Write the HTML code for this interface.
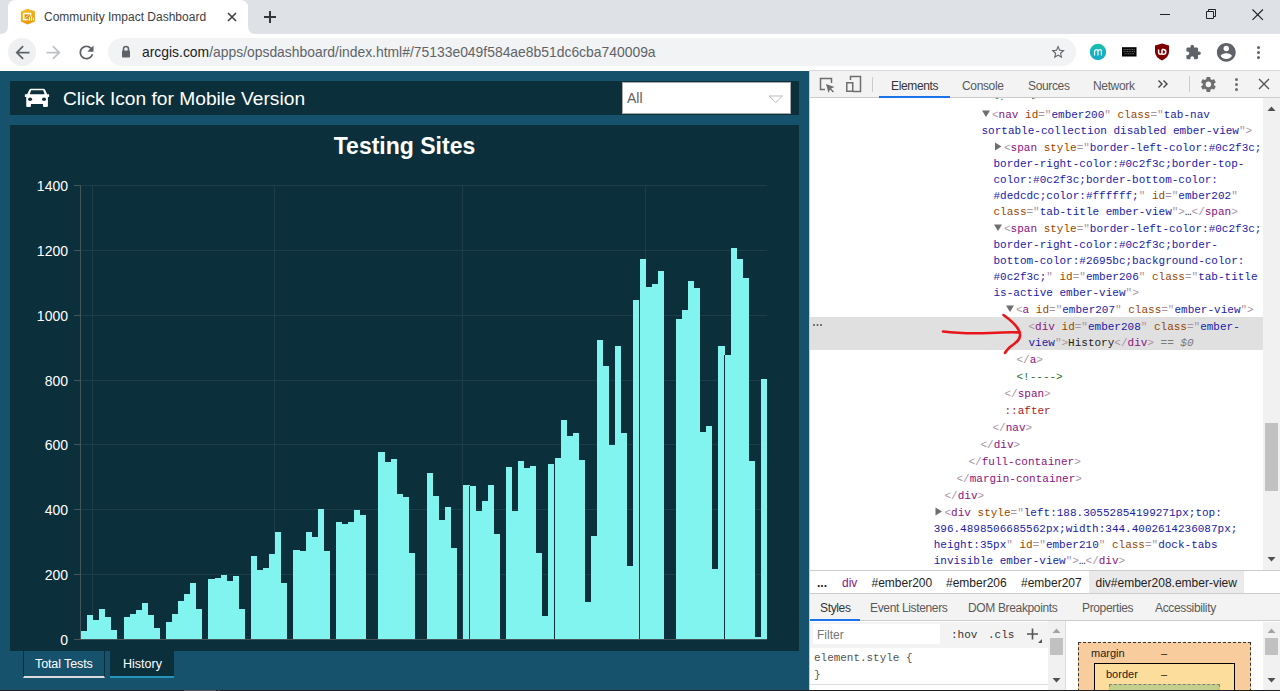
<!DOCTYPE html>
<html><head><meta charset="utf-8">
<style>
*{margin:0;padding:0;box-sizing:border-box}
html,body{width:1280px;height:691px;overflow:hidden;background:#fff;font-family:"Liberation Sans",sans-serif;position:relative}
.a{position:absolute}
.t{position:absolute;white-space:pre;line-height:1}
.mono{font-family:"Liberation Mono",monospace}
</style></head><body>

<!-- ============ BROWSER CHROME ============ -->
<div class="a" style="left:0;top:0;width:1280px;height:34px;background:#dee1e6"></div>
<svg class="a" style="left:0;top:0" width="260" height="34"><path d="M0,34 Q8,34 8,26 V8 Q8,0 16,0 H240 Q248,0 248,8 V26 Q248,34 256,34 Z" fill="#fff"/></svg>
<!-- favicon -->
<svg class="a" style="left:16px;top:5px" width="24" height="24" viewBox="0 0 24 24">
<defs><linearGradient id="fg" x1="0" y1="0" x2="0.4" y2="1"><stop offset="0" stop-color="#f7c12a"/><stop offset="1" stop-color="#e99a0c"/></linearGradient></defs>
<path d="M4.9,6.6 L11.5,3.8 L18.9,6.3 V16.6 L11.5,19.4 L4.9,16.6 Z" fill="url(#fg)"/>
<path d="M7.6,8.6 H14.6 V10.6 M11.6,14.4 H7.6 V8.6" stroke="#fff" stroke-width="1.5" fill="none"/>
<rect x="9" y="9.8" width="4.6" height="3.6" fill="#d78a10"/>
<path d="M9.2,12.8 L12.6,10.2" stroke="#fff" stroke-width="0.8"/>
<rect x="12.8" y="11.6" width="1.2" height="4" fill="#fff"/><rect x="14.9" y="11.2" width="1.2" height="4.4" fill="#fff"/><rect x="17" y="12.9" width="1.1" height="2.7" fill="#fff"/>
</svg>
<div class="t" style="left:44px;top:11px;font-size:12px;color:#3c4043">Community Impact Dashboard</div>
<svg class="a" style="left:226px;top:11px" width="12" height="12"><path d="M2,2 L10,10 M10,2 L2,10" stroke="#3c4043" stroke-width="1.6"/></svg>
<svg class="a" style="left:263px;top:10px" width="14" height="14"><path d="M7,1 V13 M1,7 H13" stroke="#35363a" stroke-width="2"/></svg>
<!-- window controls -->
<div class="a" style="left:1160px;top:14px;width:10px;height:1px;background:#202124"></div>
<svg class="a" style="left:1204px;top:7px" width="14" height="14"><path d="M2.5,4.5 H9.5 V11.5 H2.5 Z M4.5,4.5 V2.5 H11.5 V9.5 H9.5" stroke="#202124" stroke-width="1" fill="none"/></svg>
<svg class="a" style="left:1250.5px;top:7.5px" width="14" height="14"><path d="M1.5,1.5 L11.9,11.9 M11.9,1.5 L1.5,11.9" stroke="#202124" stroke-width="1.1"/></svg>

<!-- toolbar -->
<div class="a" style="left:0;top:34px;width:1280px;height:37px;background:#fff"></div>
<div class="a" style="left:8px;top:38px;width:28px;height:28px;border-radius:14px;background:#eef0f2"></div>
<svg class="a" style="left:11.5px;top:41.5px" width="21" height="21" viewBox="0 0 24 24"><path fill="#5f6368" d="M20 11H7.83l5.59-5.59L12 4l-8 8 8 8 1.41-1.41L7.83 13H20v-2z"/></svg>
<svg class="a" style="left:43.4px;top:41.5px" width="21" height="21" viewBox="0 0 24 24"><path fill="#bdc1c6" d="M4 11h12.17l-5.59-5.59L12 4l8 8-8 8-1.41-1.41L16.17 13H4v-2z"/></svg>
<svg class="a" style="left:75.5px;top:42px" width="21" height="21" viewBox="0 0 24 24"><path fill="#5f6368" d="M17.65 6.35C16.2 4.9 14.21 4 12 4c-4.42 0-7.99 3.58-7.99 8s3.57 8 7.99 8c3.730 0 6.840-2.550 7.730-6h-2.080c-.820 2.330-3.040 4-5.650 4-3.310 0-6-2.690-6-6s2.690-6 6-6c1.660 0 3.140.690 4.220 1.780L13 11h7V4l-2.350 2.350z"/></svg>
<div class="a" style="left:108px;top:38px;width:968px;height:28px;border-radius:14px;background:#f1f3f4"></div>
<svg class="a" style="left:120px;top:44px" width="12" height="16"><path d="M3.5,7 V5 A2.5,2.5 0 0 1 8.5,5 V7" stroke="#5f6368" stroke-width="1.6" fill="none"/><rect x="2" y="6.5" width="8" height="7" rx="0.8" fill="#5f6368"/></svg>
<div class="t" style="left:142px;top:46.3px;font-size:13.9px;color:#5f6368"><span style="color:#202124">arcgis.com</span>/apps/opsdashboard/index.html#/75133e049f584ae8b51dc6cba740009a</div>
<svg class="a" style="left:1049.9px;top:44.25px" width="16.2" height="16.2" viewBox="0 0 24 24"><path fill="#5f6368" d="M22 9.24l-7.19-.62L12 2 9.19 8.63 2 9.24l5.46 4.73L5.82 21 12 17.27 18.18 21l-1.63-7.030L22 9.24zM12 15.4l-3.76 2.27 1-4.28-3.32-2.88 4.38-.38L12 6.1l1.71 4.04 4.38.38-3.32 2.88 1 4.28L12 15.4z"/></svg>
<svg class="a" style="left:1089px;top:43px" width="18" height="18"><defs><linearGradient id="mg" x1="0" y1="0" x2="0" y2="1"><stop offset="0" stop-color="#19c0a6"/><stop offset="0.5" stop-color="#16b2c2"/><stop offset="1" stop-color="#17a9c9"/></linearGradient></defs><circle cx="9" cy="9" r="8.2" fill="url(#mg)"/><path d="M5.6,12.5 V7.2 M5.6,8.2 Q6.3,6.6 7.6,6.6 Q9,6.6 9,8.2 V12.5 M9,8.2 Q9.7,6.6 11,6.6 Q12.4,6.6 12.4,8.2 V12.5" stroke="#fff" stroke-width="1.1" fill="none"/></svg>
<svg class="a" style="left:1121px;top:46px" width="17" height="12"><rect x="1" y="1.2" width="14.5" height="9.3" fill="#000"/><path d="M2.5,3.6 H14 M2.5,5.6 H14 M3.5,7.8 H13" stroke="#777" stroke-width="0.9" stroke-dasharray="1.2,0.5"/></svg>
<svg class="a" style="left:1154px;top:43px" width="16" height="18"><path d="M8,0.5 L15,2.5 V9 Q15,14 8,17.5 Q1,14 1,9 V2.5 Z" fill="#800000"/><path d="M4.6,6.6 V9.6 Q4.6,11.3 6.3,11.3 Q8,11.3 8,9.6 V6.6 M8,6.6 H9.3 Q11.8,6.6 11.8,9 Q11.8,11.3 9.3,11.3 H8" stroke="#fff" stroke-width="1.5" fill="none"/></svg>
<svg class="a" style="left:1185.4px;top:44.2px" width="16.5" height="16.5" viewBox="0 0 24 24"><path fill="#5f6368" d="M20.5 11H19V7c0-1.1-.9-2-2-2h-4V3.5C13 2.12 11.88 1 10.5 1S8 2.12 8 3.5V5H4c-1.1 0-1.99.9-1.99 2v3.8H3.5c1.49 0 2.7 1.21 2.7 2.7s-1.21 2.7-2.7 2.7H2V20c0 1.1.9 2 2 2h3.8v-1.5c0-1.49 1.21-2.7 2.7-2.7 1.49 0 2.7 1.21 2.7 2.7V22H17c1.1 0 2-.9 2-2v-4h1.5c1.38 0 2.5-1.12 2.5-2.5S21.88 11 20.5 11z"/></svg>
<svg class="a" style="left:1214.7px;top:40.5px" width="22.6" height="22.6" viewBox="0 0 24 24"><path fill="#5f6368" d="M12 2C6.48 2 2 6.48 2 12s4.48 10 10 10 10-4.48 10-10S17.52 2 12 2zm0 3c1.66 0 3 1.34 3 3s-1.34 3-3 3-3-1.34-3-3 1.34-3 3-3zm0 14.2c-2.5 0-4.71-1.28-6-3.22.03-1.99 4-3.08 6-3.08 1.99 0 5.970 1.090 6 3.080-1.290 1.940-3.5 3.220-6 3.220z"/></svg>
<div class="a" style="left:1257px;top:46px;width:3px;height:3px;border-radius:2px;background:#5f6368"></div>
<div class="a" style="left:1257px;top:51px;width:3px;height:3px;border-radius:2px;background:#5f6368"></div>
<div class="a" style="left:1257px;top:56px;width:3px;height:3px;border-radius:2px;background:#5f6368"></div>

<!-- ============ DASHBOARD ============ -->
<div class="a" style="left:0;top:71px;width:809px;height:620px;background:#17526c"></div>
<div class="a" style="left:10px;top:81px;width:789px;height:34px;background:#0c2f3c"></div>
<svg class="a" style="left:20px;top:84px" width="34" height="27" viewBox="0 0 34 27">
<path d="M9.2,6 Q9.8,4.7 11,4.7 H23.4 Q24.6,4.7 25.2,6 L27.2,10.35 H29.1 V12.9 H27.9 V22 Q27.9,23 26.9,23 H24 Q23,23 23,22 V19.9 H10.9 V22 Q10.9,23 9.9,23 H7.25 Q6.25,23 6.25,22 V12.9 H4.9 V10.35 H7.2 Z" fill="#fff"/>
<path d="M11.2,6.3 H23.2 L24.6,10.35 H9.7 Z" fill="#0c2f3c"/>
<ellipse cx="10.1" cy="15.2" rx="2" ry="1.8" fill="#0c2f3c"/><ellipse cx="24" cy="15.2" rx="2" ry="1.8" fill="#0c2f3c"/>
</svg>
<div class="t" style="left:63px;top:89px;font-size:19.2px;color:#fff">Click Icon for Mobile Version</div>
<div class="a" style="left:622px;top:82px;width:169px;height:32px;background:#fff;border:1px solid #a9a9a9"></div>
<div class="t" style="left:627px;top:91px;font-size:14px;color:#606060">All</div>
<svg class="a" style="left:768px;top:95px" width="16" height="9"><path d="M1,1 H14.5 L7.75,7.5 Z" stroke="#bbb" stroke-width="1" fill="none"/></svg>

<div class="a" style="left:10px;top:125px;width:789px;height:526px;background:#0c2f3c"></div>
<div class="t" style="left:10px;top:135px;width:789px;text-align:center;font-size:23px;font-weight:bold;color:#fff">Testing Sites</div>

<svg class="a" style="left:0;top:0" width="809" height="691">
<g stroke="#1e3d4a" stroke-width="1" shape-rendering="crispEdges">
<path d="M81,185.5 H767 M81,250.5 H767 M81,315.5 H767 M81,380.5 H767 M81,444.5 H767 M81,509.5 H767 M81,574.5 H767 "/>
<path d="M92.5,185 V639 M274.5,185 V639 M462.5,185 V639 M645.5,185 V639"/>
</g>
<path d="M80.5,185 V639 M81,639.5 H767 M74,185.5 H81 M74,250.5 H81 M74,315.5 H81 M74,380.5 H81 M74,444.5 H81 M74,509.5 H81 M74,574.5 H81 M74,639.5 H81 " stroke="#44555c" stroke-width="1" shape-rendering="crispEdges"/>
<g fill="#82f4f0" shape-rendering="crispEdges">
<rect x="81.00" y="631" width="6.12" height="8"/>
<rect x="87.07" y="615" width="6.12" height="24"/>
<rect x="93.14" y="620" width="6.12" height="19"/>
<rect x="99.21" y="609" width="6.12" height="30"/>
<rect x="105.28" y="617" width="6.12" height="22"/>
<rect x="111.35" y="630" width="6.12" height="9"/>
<rect x="123.50" y="617" width="6.12" height="22"/>
<rect x="129.57" y="614" width="6.12" height="25"/>
<rect x="135.64" y="610" width="6.12" height="29"/>
<rect x="141.71" y="603" width="6.12" height="36"/>
<rect x="147.78" y="615" width="6.12" height="24"/>
<rect x="153.85" y="628" width="6.12" height="11"/>
<rect x="159.92" y="639" width="6.12" height="0"/>
<rect x="165.99" y="622" width="6.12" height="17"/>
<rect x="172.06" y="614" width="6.12" height="25"/>
<rect x="178.13" y="601" width="6.12" height="38"/>
<rect x="184.20" y="594" width="6.12" height="45"/>
<rect x="190.27" y="583" width="6.12" height="56"/>
<rect x="196.35" y="609" width="6.12" height="30"/>
<rect x="208.49" y="579" width="6.12" height="60"/>
<rect x="214.56" y="578" width="6.12" height="61"/>
<rect x="220.63" y="575" width="6.12" height="64"/>
<rect x="226.70" y="581" width="6.12" height="58"/>
<rect x="232.77" y="576" width="6.12" height="63"/>
<rect x="238.84" y="609" width="6.12" height="30"/>
<rect x="250.98" y="556" width="6.12" height="83"/>
<rect x="257.05" y="570" width="6.12" height="69"/>
<rect x="263.12" y="568" width="6.12" height="71"/>
<rect x="269.19" y="554" width="6.12" height="85"/>
<rect x="275.27" y="532" width="6.12" height="107"/>
<rect x="281.34" y="583" width="6.12" height="56"/>
<rect x="293.48" y="550" width="6.12" height="89"/>
<rect x="299.55" y="551" width="6.12" height="88"/>
<rect x="305.62" y="532" width="6.12" height="107"/>
<rect x="311.69" y="537" width="6.12" height="102"/>
<rect x="317.76" y="509" width="6.12" height="130"/>
<rect x="323.83" y="551" width="6.12" height="88"/>
<rect x="335.97" y="522" width="6.12" height="117"/>
<rect x="342.04" y="524" width="6.12" height="115"/>
<rect x="348.12" y="522" width="6.12" height="117"/>
<rect x="354.19" y="510" width="6.12" height="129"/>
<rect x="360.26" y="515" width="6.12" height="124"/>
<rect x="378.47" y="452" width="6.12" height="187"/>
<rect x="384.54" y="462" width="6.12" height="177"/>
<rect x="390.61" y="459" width="6.12" height="180"/>
<rect x="396.68" y="494" width="6.12" height="145"/>
<rect x="402.75" y="497" width="6.12" height="142"/>
<rect x="408.82" y="553" width="6.12" height="86"/>
<rect x="427.04" y="473" width="6.12" height="166"/>
<rect x="433.11" y="496" width="6.12" height="143"/>
<rect x="439.18" y="520" width="6.12" height="119"/>
<rect x="445.25" y="507" width="6.12" height="132"/>
<rect x="451.32" y="548" width="6.12" height="91"/>
<rect x="463.46" y="485" width="6.12" height="154"/>
<rect x="469.53" y="486" width="6.12" height="153"/>
<rect x="475.60" y="511" width="6.12" height="128"/>
<rect x="481.67" y="501" width="6.12" height="138"/>
<rect x="487.74" y="485" width="6.12" height="154"/>
<rect x="493.81" y="534" width="6.12" height="105"/>
<rect x="505.96" y="467" width="6.12" height="172"/>
<rect x="512.03" y="511" width="6.12" height="128"/>
<rect x="518.10" y="461" width="6.12" height="178"/>
<rect x="524.17" y="468" width="6.12" height="171"/>
<rect x="530.24" y="466" width="6.12" height="173"/>
<rect x="536.31" y="553" width="6.12" height="86"/>
<rect x="542.38" y="616" width="6.12" height="23"/>
<rect x="548.45" y="464" width="6.12" height="175"/>
<rect x="554.52" y="458" width="6.12" height="181"/>
<rect x="560.59" y="420" width="6.12" height="219"/>
<rect x="566.66" y="436" width="6.12" height="203"/>
<rect x="572.73" y="433" width="6.12" height="206"/>
<rect x="578.81" y="460" width="6.12" height="179"/>
<rect x="584.88" y="602" width="6.12" height="37"/>
<rect x="590.95" y="536" width="6.12" height="103"/>
<rect x="597.02" y="340" width="6.12" height="299"/>
<rect x="603.09" y="366" width="6.12" height="273"/>
<rect x="609.16" y="445" width="6.12" height="194"/>
<rect x="615.23" y="346" width="6.12" height="293"/>
<rect x="621.30" y="433" width="6.12" height="206"/>
<rect x="627.37" y="566" width="6.12" height="73"/>
<rect x="633.44" y="300" width="6.12" height="339"/>
<rect x="639.51" y="259" width="6.12" height="380"/>
<rect x="645.58" y="287" width="6.12" height="352"/>
<rect x="651.65" y="284" width="6.12" height="355"/>
<rect x="657.73" y="271" width="6.12" height="368"/>
<rect x="675.94" y="319" width="6.12" height="320"/>
<rect x="682.01" y="310" width="6.12" height="329"/>
<rect x="688.08" y="281" width="6.12" height="358"/>
<rect x="694.15" y="288" width="6.12" height="351"/>
<rect x="700.22" y="432" width="6.12" height="207"/>
<rect x="706.29" y="426" width="6.12" height="213"/>
<rect x="712.36" y="569" width="6.12" height="70"/>
<rect x="718.43" y="346" width="6.12" height="293"/>
<rect x="724.50" y="355" width="6.12" height="284"/>
<rect x="730.58" y="248" width="6.12" height="391"/>
<rect x="736.65" y="259" width="6.12" height="380"/>
<rect x="742.72" y="278" width="6.12" height="361"/>
<rect x="748.79" y="461" width="6.12" height="178"/>
<rect x="754.86" y="637" width="6.12" height="2"/>
<rect x="760.93" y="379" width="6.12" height="260"/>
</g>
<g shape-rendering="crispEdges"><rect x="469.0" y="486" width="1" height="153" fill="#0c2f3c"/><rect x="554.0" y="464" width="1" height="175" fill="#0c2f3c"/><rect x="639.0" y="300" width="1" height="339" fill="#0c2f3c"/><rect x="724.0" y="355" width="1" height="284" fill="#0c2f3c"/></g>
</svg>
<div class="t" style="left:20px;top:179px;width:48px;text-align:right;font-size:14px;color:#fff">1400</div>
<div class="t" style="left:20px;top:244px;width:48px;text-align:right;font-size:14px;color:#fff">1200</div>
<div class="t" style="left:20px;top:309px;width:48px;text-align:right;font-size:14px;color:#fff">1000</div>
<div class="t" style="left:20px;top:374px;width:48px;text-align:right;font-size:14px;color:#fff">800</div>
<div class="t" style="left:20px;top:438px;width:48px;text-align:right;font-size:14px;color:#fff">600</div>
<div class="t" style="left:20px;top:503px;width:48px;text-align:right;font-size:14px;color:#fff">400</div>
<div class="t" style="left:20px;top:568px;width:48px;text-align:right;font-size:14px;color:#fff">200</div>
<div class="t" style="left:20px;top:633px;width:48px;text-align:right;font-size:14px;color:#fff">0</div>

<!-- bottom tabs -->
<div class="a" style="left:23px;top:651px;width:82px;height:27px;border-left:1px solid #0c2f3c;border-right:1px solid #0c2f3c;border-bottom:2px solid #dedcdc"></div>
<div class="t" style="left:35px;top:658px;font-size:12.5px;letter-spacing:-0.1px;color:#fff">Total Tests</div>
<div class="a" style="left:110px;top:651px;width:64px;height:27px;background:#0c2f3c;border-bottom:2px solid #2695bc"></div>
<div class="t" style="left:123px;top:658px;font-size:12.5px;color:#fff">History</div>



<!-- ============ DEVTOOLS ============ -->

<div class="a" style="left:809px;top:70px;width:471px;height:1px;background:#d6d8db"></div>
<div class="a" style="left:809px;top:71px;width:471px;height:620px;background:#fff;border-left:1px solid #ccc"></div>
<div class="a" style="left:810px;top:71px;width:470px;height:27px;background:#f3f3f3;border-bottom:1px solid #cbcbcb"></div>
<svg class="a" style="left:818px;top:76px" width="18" height="18"><path d="M7,13.5 H2.5 V2.5 H13.5 V7" stroke="#6e6e6e" stroke-width="1.5" fill="none"/><path d="M8,8 L16.5,11 L13,12.5 L16,15.5 L15,16.5 L12,13.5 L10.5,17 Z" fill="#6e6e6e"/></svg>
<svg class="a" style="left:845px;top:75px" width="18" height="18"><path d="M5.5,5 V1.5 H15.5 V16.5 H8" stroke="#6e6e6e" stroke-width="1.5" fill="none"/><rect x="1.75" y="7.75" width="6" height="8.5" stroke="#6e6e6e" stroke-width="1.5" fill="none"/></svg>
<div class="a" style="left:872px;top:77px;width:1px;height:15px;background:#ccc"></div>
<div class="t" style="left:891px;top:80px;font-size:12px;letter-spacing:-0.35px;color:#333">Elements</div>
<div class="a" style="left:879px;top:96px;width:71px;height:2px;background:#1a73e8"></div>
<div class="t" style="left:962px;top:80px;font-size:12px;letter-spacing:-0.35px;color:#5a5a5a">Console</div>
<div class="t" style="left:1028px;top:80px;font-size:12px;letter-spacing:-0.35px;color:#5a5a5a">Sources</div>
<div class="t" style="left:1093px;top:80px;font-size:12px;letter-spacing:-0.35px;color:#5a5a5a">Network</div>
<svg class="a" style="left:1157px;top:79px" width="12" height="10"><path d="M1.5,1.5 L5,5 L1.5,8.5 M6.5,1.5 L10,5 L6.5,8.5" stroke="#444" stroke-width="1.4" fill="none"/></svg>
<div class="a" style="left:1189px;top:76px;width:1px;height:16px;background:#ccc"></div>
<svg class="a" style="left:1198.6px;top:75.2px" width="18.8" height="18.8" viewBox="0 0 24 24"><path fill="#6e6e6e" d="M19.14,12.94c0.04-0.3,0.06-0.61,0.06-0.94c0-0.32-0.02-0.64-0.07-0.94l2.03-1.58c0.18-0.14,0.23-0.41,0.12-0.61 l-1.92-3.32c-0.12-0.22-0.37-0.29-0.59-0.22l-2.39,0.96c-0.5-0.38-1.03-0.7-1.62-0.94L14.4,2.81c-0.04-0.24-0.24-0.41-0.48-0.41 h-3.84c-0.24,0-0.43,0.17-0.47,0.41L9.25,5.35C8.66,5.59,8.12,5.92,7.63,6.29L5.24,5.33c-0.22-0.08-0.47,0-0.59,0.22L2.74,8.87 C2.62,9.08,2.66,9.34,2.86,9.48l2.03,1.58C4.84,11.36,4.8,11.69,4.8,12s0.02,0.64,0.07,0.94l-2.03,1.58 c-0.18,0.14-0.23,0.41-0.12,0.61l1.92,3.32c0.12,0.22,0.37,0.29,0.59,0.22l2.39-0.96c0.5,0.38,1.03,0.7,1.62,0.94l0.36,2.54 c0.05,0.24,0.24,0.41,0.48,0.41h3.84c0.24,0,0.44-0.17,0.47-0.41l0.36-2.54c0.59-0.24,1.13-0.56,1.62-0.94l2.39,0.96 c0.22,0.08,0.47,0,0.59-0.22l1.92-3.32c0.12-0.22,0.07-0.47-0.12-0.61L19.14,12.94z M12,15.6c-1.98,0-3.6-1.62-3.6-3.6 s1.62-3.6,3.6-3.6s3.6,1.62,3.6,3.6S13.98,15.6,12,15.6z"/></svg>
<div class="a" style="left:1235px;top:78px;width:3px;height:3px;border-radius:2px;background:#6e6e6e"></div>
<div class="a" style="left:1235px;top:83px;width:3px;height:3px;border-radius:2px;background:#6e6e6e"></div>
<div class="a" style="left:1235px;top:88px;width:3px;height:3px;border-radius:2px;background:#6e6e6e"></div>
<svg class="a" style="left:1258px;top:78px" width="12" height="12"><path d="M1,1 L11,11 M11,1 L1,11" stroke="#555" stroke-width="1.4"/></svg>

<!-- DOM scrollbar -->
<div class="a" style="left:1263px;top:98px;width:17px;height:472px;background:#f1f1f1"></div>
<svg class="a" style="left:1263px;top:98px" width="17" height="472"><path d="M4.5,13 L8.5,8.5 L12.5,13 Z" fill="#505050"/><rect x="2" y="325" width="13" height="68" fill="#c1c1c1"/><path d="M4.5,459 L8.5,463.5 L12.5,459 Z" fill="#505050"/></svg>

<svg class="a" style="left:810px;top:98px" width="453" height="472" viewBox="810 98 453 472">
<rect x="810" y="317" width="453" height="33" fill="#e0e0e0"/>
<g font-family="Liberation Mono" font-size="11">
<text x="992" y="100.4" xml:space="preserve"><tspan fill="#236e25">&lt;!----&gt;</tspan></text>
<text x="992" y="118.4" xml:space="preserve"><tspan fill="#a894a6">&lt;</tspan><tspan fill="#881280">nav</tspan><tspan fill="#a894a6"> </tspan><tspan fill="#994500">id</tspan><tspan fill="#a894a6">=&quot;</tspan><tspan fill="#1a1aa6">ember200</tspan><tspan fill="#a894a6">&quot; </tspan><tspan fill="#994500">class</tspan><tspan fill="#a894a6">=&quot;</tspan><tspan fill="#1a1aa6">tab-nav</tspan></text>
<path d="M982.0,110.4 h8 l-4,6.5 z" fill="#6e6e6e"/>
<text x="981.5" y="134.4" xml:space="preserve"><tspan fill="#1a1aa6">sortable-collection disabled ember-view</tspan><tspan fill="#a894a6">&quot;&gt;</tspan></text>
<text x="1004" y="151.4" xml:space="preserve"><tspan fill="#a894a6">&lt;</tspan><tspan fill="#881280">span</tspan><tspan fill="#a894a6"> </tspan><tspan fill="#994500">style</tspan><tspan fill="#a894a6">=&quot;</tspan><tspan fill="#1a1aa6">border-left-color:#0c2f3c;</tspan></text>
<path d="M995.0,142.4 v8 l6.5,-4 z" fill="#6e6e6e"/>
<text x="993.5" y="167.4" xml:space="preserve"><tspan fill="#1a1aa6">border-right-color:#0c2f3c;border-top-</tspan></text>
<text x="993.5" y="183.4" xml:space="preserve"><tspan fill="#1a1aa6">color:#0c2f3c;border-bottom-color:</tspan></text>
<text x="993.5" y="199.4" xml:space="preserve"><tspan fill="#1a1aa6">#dedcdc;color:#ffffff;</tspan><tspan fill="#a894a6">&quot; </tspan><tspan fill="#994500">id</tspan><tspan fill="#a894a6">=&quot;</tspan><tspan fill="#1a1aa6">ember202</tspan><tspan fill="#a894a6">&quot;</tspan></text>
<text x="993.5" y="215.4" xml:space="preserve"><tspan fill="#994500">class</tspan><tspan fill="#a894a6">=&quot;</tspan><tspan fill="#1a1aa6">tab-title ember-view</tspan><tspan fill="#a894a6">&quot;&gt;</tspan><tspan fill="#222">…</tspan><tspan fill="#a894a6">&lt;/</tspan><tspan fill="#881280">span</tspan><tspan fill="#a894a6">&gt;</tspan></text>
<text x="1004" y="232.4" xml:space="preserve"><tspan fill="#a894a6">&lt;</tspan><tspan fill="#881280">span</tspan><tspan fill="#a894a6"> </tspan><tspan fill="#994500">style</tspan><tspan fill="#a894a6">=&quot;</tspan><tspan fill="#1a1aa6">border-left-color:#0c2f3c;</tspan></text>
<path d="M994.0,224.4 h8 l-4,6.5 z" fill="#6e6e6e"/>
<text x="993.5" y="248.4" xml:space="preserve"><tspan fill="#1a1aa6">border-right-color:#0c2f3c;border-</tspan></text>
<text x="993.5" y="264.4" xml:space="preserve"><tspan fill="#1a1aa6">bottom-color:#2695bc;background-color:</tspan></text>
<text x="993.5" y="280.4" xml:space="preserve"><tspan fill="#1a1aa6">#0c2f3c;</tspan><tspan fill="#a894a6">&quot; </tspan><tspan fill="#994500">id</tspan><tspan fill="#a894a6">=&quot;</tspan><tspan fill="#1a1aa6">ember206</tspan><tspan fill="#a894a6">&quot; </tspan><tspan fill="#994500">class</tspan><tspan fill="#a894a6">=&quot;</tspan><tspan fill="#1a1aa6">tab-title</tspan></text>
<text x="993.5" y="296.4" xml:space="preserve"><tspan fill="#1a1aa6">is-active ember-view</tspan><tspan fill="#a894a6">&quot;&gt;</tspan></text>
<text x="1016" y="313.4" xml:space="preserve"><tspan fill="#a894a6">&lt;</tspan><tspan fill="#881280">a</tspan><tspan fill="#a894a6"> </tspan><tspan fill="#994500">id</tspan><tspan fill="#a894a6">=&quot;</tspan><tspan fill="#1a1aa6">ember207</tspan><tspan fill="#a894a6">&quot; </tspan><tspan fill="#994500">class</tspan><tspan fill="#a894a6">=&quot;</tspan><tspan fill="#1a1aa6">ember-view</tspan><tspan fill="#a894a6">&quot;&gt;</tspan></text>
<path d="M1006.0,305.4 h8 l-4,6.5 z" fill="#6e6e6e"/>
<text x="1028.5" y="330.4" xml:space="preserve"><tspan fill="#a894a6">&lt;</tspan><tspan fill="#881280">div</tspan><tspan fill="#a894a6"> </tspan><tspan fill="#994500">id</tspan><tspan fill="#a894a6">=&quot;</tspan><tspan fill="#1a1aa6">ember208</tspan><tspan fill="#a894a6">&quot; </tspan><tspan fill="#994500">class</tspan><tspan fill="#a894a6">=&quot;</tspan><tspan fill="#1a1aa6">ember-</tspan></text>
<text x="1028.5" y="346.4" xml:space="preserve"><tspan fill="#1a1aa6">view</tspan><tspan fill="#a894a6">&quot;&gt;</tspan><tspan fill="#222">History</tspan><tspan fill="#a894a6">&lt;/</tspan><tspan fill="#881280">div</tspan><tspan fill="#a894a6">&gt;</tspan><tspan fill="#7a7a7a"> == </tspan><tspan fill="#7a7a7a" font-style="italic">$0</tspan></text>
<text x="1016.5" y="363.4" xml:space="preserve"><tspan fill="#a894a6">&lt;/</tspan><tspan fill="#881280">a</tspan><tspan fill="#a894a6">&gt;</tspan></text>
<text x="1016.5" y="380.4" xml:space="preserve"><tspan fill="#236e25">&lt;!----&gt;</tspan></text>
<text x="1004.5" y="397.4" xml:space="preserve"><tspan fill="#a894a6">&lt;/</tspan><tspan fill="#881280">span</tspan><tspan fill="#a894a6">&gt;</tspan></text>
<text x="1004.5" y="414.4" xml:space="preserve"><tspan fill="#a31c1c">::after</tspan></text>
<text x="992.5" y="431.4" xml:space="preserve"><tspan fill="#a894a6">&lt;/</tspan><tspan fill="#881280">nav</tspan><tspan fill="#a894a6">&gt;</tspan></text>
<text x="980.5" y="448.4" xml:space="preserve"><tspan fill="#a894a6">&lt;/</tspan><tspan fill="#881280">div</tspan><tspan fill="#a894a6">&gt;</tspan></text>
<text x="968.5" y="465.4" xml:space="preserve"><tspan fill="#a894a6">&lt;/</tspan><tspan fill="#881280">full-container</tspan><tspan fill="#a894a6">&gt;</tspan></text>
<text x="956.5" y="482.4" xml:space="preserve"><tspan fill="#a894a6">&lt;/</tspan><tspan fill="#881280">margin-container</tspan><tspan fill="#a894a6">&gt;</tspan></text>
<text x="944.5" y="499.4" xml:space="preserve"><tspan fill="#a894a6">&lt;/</tspan><tspan fill="#881280">div</tspan><tspan fill="#a894a6">&gt;</tspan></text>
<text x="944.5" y="516.4" xml:space="preserve"><tspan fill="#a894a6">&lt;</tspan><tspan fill="#881280">div</tspan><tspan fill="#a894a6"> </tspan><tspan fill="#994500">style</tspan><tspan fill="#a894a6">=&quot;</tspan><tspan fill="#1a1aa6">left:188.30552854199271px;top:</tspan></text>
<path d="M935.5,507.4 v8 l6.5,-4 z" fill="#6e6e6e"/>
<text x="933.7" y="532.4" xml:space="preserve"><tspan fill="#1a1aa6">396.4898506685562px;width:344.4002614236087px;</tspan></text>
<text x="933.7" y="548.4" xml:space="preserve"><tspan fill="#1a1aa6">height:35px</tspan><tspan fill="#a894a6">&quot; </tspan><tspan fill="#994500">id</tspan><tspan fill="#a894a6">=&quot;</tspan><tspan fill="#1a1aa6">ember210</tspan><tspan fill="#a894a6">&quot; </tspan><tspan fill="#994500">class</tspan><tspan fill="#a894a6">=&quot;</tspan><tspan fill="#1a1aa6">dock-tabs</tspan></text>
<text x="933.7" y="564.4" xml:space="preserve"><tspan fill="#1a1aa6">invisible ember-view</tspan><tspan fill="#a894a6">&quot;&gt;</tspan><tspan fill="#222">…</tspan><tspan fill="#a894a6">&lt;/</tspan><tspan fill="#881280">div</tspan><tspan fill="#a894a6">&gt;</tspan></text>
</g>
<circle cx="814" cy="325" r="1" fill="#555"/><circle cx="817.5" cy="325" r="1" fill="#555"/><circle cx="821" cy="325" r="1" fill="#555"/>
<path d="M943,331.5 C955,333 975,333.5 990,333 C1000,332.5 1012,332 1020,332.5 M1003.5,315 C1012,321 1019,327 1020,334 C1021,340 1014,344 1010,347 C1008,349 1006,351 1005,353" stroke="#e8151b" stroke-width="2.6" fill="none" stroke-linecap="round"/>
</svg>

<!-- breadcrumbs -->
<div class="a" style="left:810px;top:570px;width:470px;height:24px;background:#fff;border-top:1px solid #ccc;border-bottom:1px solid #ccc"></div>
<div class="a" style="left:1089px;top:571px;width:155px;height:22px;background:#eaeaea"></div>
<div class="t" style="left:817px;top:577px;font-size:12px;color:#222;font-weight:bold">...</div>
<div class="t" style="left:842px;top:577px;font-size:12px;color:#881280">div</div>
<div class="t" style="left:871.5px;top:577px;font-size:12px;color:#222">#ember200</div>
<div class="t" style="left:946px;top:577px;font-size:12px;color:#222">#ember206</div>
<div class="t" style="left:1021px;top:577px;font-size:12px;color:#222">#ember207</div>
<div class="t" style="left:1095.5px;top:577px;font-size:12px;color:#222">div#ember208.ember-view</div>

<!-- styles tabs -->
<div class="a" style="left:810px;top:594px;width:470px;height:27px;background:#f3f3f3;border-bottom:1px solid #ccc"></div>
<div class="a" style="left:810px;top:619px;width:50px;height:2px;background:#1a73e8"></div>
<div class="t" style="left:820px;top:602px;font-size:12px;letter-spacing:-0.35px;color:#333">Styles</div>
<div class="t" style="left:870px;top:602px;font-size:12px;letter-spacing:-0.35px;color:#5a5a5a">Event Listeners</div>
<div class="t" style="left:968px;top:602px;font-size:12px;letter-spacing:-0.35px;color:#5a5a5a">DOM Breakpoints</div>
<div class="t" style="left:1082px;top:602px;font-size:12px;letter-spacing:-0.35px;color:#5a5a5a">Properties</div>
<div class="t" style="left:1155px;top:602px;font-size:12px;letter-spacing:-0.35px;color:#5a5a5a">Accessibility</div>

<!-- styles filter -->
<div class="a" style="left:810px;top:622px;width:238px;height:26px;background:#f3f3f3"></div>
<div class="a" style="left:813px;top:624px;width:127px;height:20px;background:#fff"></div>
<div class="t" style="left:817px;top:629px;font-size:12px;color:#757575">Filter</div>
<div class="t mono" style="left:951px;top:630px;font-size:11px;color:#333">:hov</div>
<div class="t mono" style="left:988px;top:630px;font-size:11px;color:#333">.cls</div>
<svg class="a" style="left:1025px;top:627px" width="24" height="18"><path d="M2,7 H13 M7.5,1.5 V12.5" stroke="#555" stroke-width="1.6"/><path d="M13,16 L17,12 V16 Z" fill="#555"/></svg>
<div class="t mono" style="left:814px;top:653px;font-size:10.95px;color:#555">element.style {</div>
<div class="t mono" style="left:814px;top:670px;font-size:10.95px;color:#555">}</div>
<div class="a" style="left:810px;top:684px;width:238px;height:1px;background:#ddd"></div>
<div class="a" style="left:1048px;top:621px;width:18px;height:69px;background:#f1f1f1;border-right:1px solid #ddd"></div>
<svg class="a" style="left:1048px;top:622px" width="17" height="68"><path d="M4.5,11 L8.5,6.5 L12.5,11 Z" fill="#a3a3a3"/><rect x="2" y="16" width="13" height="17" fill="#c1c1c1"/><path d="M4.5,56 L8.5,60.5 L12.5,56 Z" fill="#505050"/></svg>

<!-- box model -->
<div class="a" style="left:1078px;top:642px;width:173px;height:60px;background:#f9cc9d;border:1px dashed #333"></div>
<div class="t" style="left:1091px;top:648px;font-size:11px;color:#222">margin</div>
<div class="t" style="left:1161px;top:648px;font-size:11px;color:#222">–</div>
<div class="a" style="left:1094px;top:663px;width:141px;height:40px;background:#fddd9b;border:1px solid #000"></div>
<div class="t" style="left:1106px;top:669px;font-size:11px;color:#222">border</div>
<div class="t" style="left:1161px;top:669px;font-size:11px;color:#222">–</div>
<div class="a" style="left:1109px;top:684px;width:111px;height:20px;background:#c3d08b;border:1px dashed #808080"></div>
<div class="a" style="left:1263px;top:622px;width:17px;height:68px;background:#f1f1f1"></div>
<svg class="a" style="left:1263px;top:622px" width="17" height="68"><path d="M4.5,11 L8.5,6.5 L12.5,11 Z" fill="#a3a3a3"/><rect x="2" y="16" width="13" height="17" fill="#c1c1c1"/><path d="M4.5,56 L8.5,60.5 L12.5,56 Z" fill="#505050"/></svg>

<div class="a" style="left:0;top:690px;width:1280px;height:1px;background:#202020"></div>
<div class="a" style="left:184px;top:690px;width:32px;height:1px;background:#5a5a5a"></div><div class="a" style="left:218px;top:690px;width:2px;height:1px;background:#444"></div>

</body></html>
